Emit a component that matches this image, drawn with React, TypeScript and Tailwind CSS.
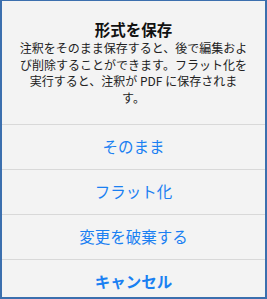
import React from 'react';

const actions = ['そのまま', 'フラット化', '変更を破棄する'];

const App: React.FC = () => {
  return (
    <div
      className="w-[267px] h-[299px] overflow-hidden border-x-2 border-t border-b-2 border-[#3b6fae] bg-[#f3f3f3] text-center"
      style={{ fontFamily: '"Noto Sans CJK JP", "Noto Sans", sans-serif' }}
    >
      <div className="px-[12px] pt-[20px] pb-[17px]">
        <h2 className="text-[15.5px] leading-[17px] font-bold text-[#111]">形式を保存</h2>
        <p className="mt-[2px] text-[12px] leading-[16.7px] text-[#222]">
          注釈をそのまま保存すると、後で編集およ
          <br />
          び削除することができます。フラット化を
          <br />
          実行すると、注釈が PDF に保存されま
          <br />
          す。
        </p>
      </div>

      {actions.map((label) => (
        <div
          key={label}
          className="h-[45px] flex items-center justify-center border-t border-[#d8d8d8] text-[15.5px] text-[#1a80f2]"
        >
          {label}
        </div>
      ))}

      <div className="h-[45px] flex items-center justify-center border-t border-[#d8d8d8] text-[15.5px] font-bold text-[#1a80f2]">
        キャンセル
      </div>
    </div>
  );
};

export default App;
